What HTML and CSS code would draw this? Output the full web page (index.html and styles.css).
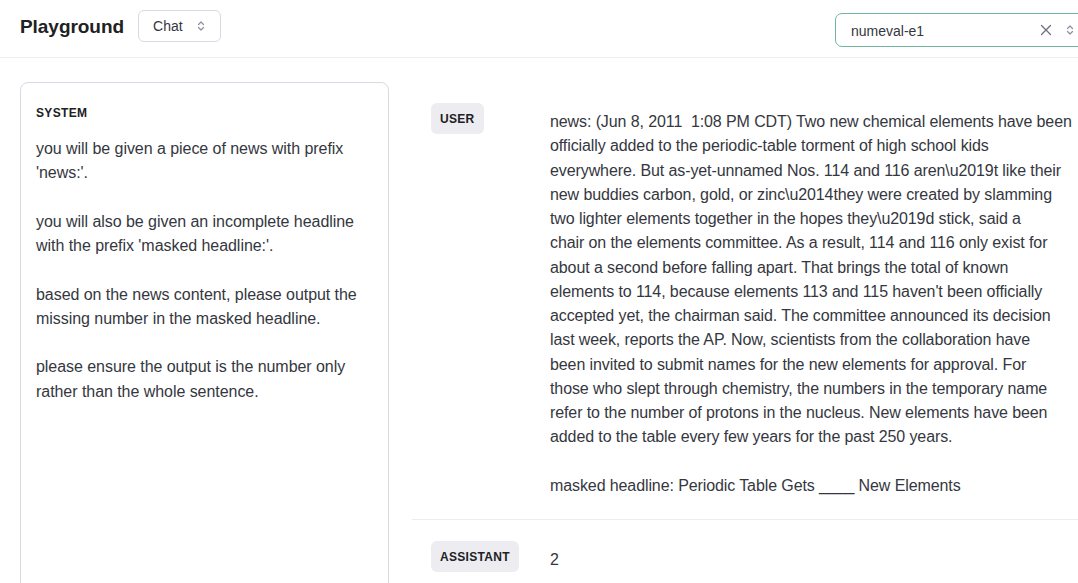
FILE: index.html
```html
<!DOCTYPE html>
<html lang="en">
<head>
<meta charset="utf-8">
<title>Playground</title>
<link rel="stylesheet" href="styles.css">
</head>
<body>
<header class="topbar">
  <div class="topbar-left">
    <h1 class="title">Playground</h1>
    <button class="mode-select">
      <span>Chat</span>
      <svg class="chevrons" width="8" height="12" viewBox="0 0 8 12" fill="none" stroke="currentColor" stroke-width="1.2" stroke-linecap="round" stroke-linejoin="round"><path d="M1.5 4.5 4 2l2.5 2.5"/><path d="M1.5 7.5 4 10l2.5-2.5"/></svg>
    </button>
  </div>
  <div class="model-select">
    <span class="model-name">numeval-e1</span>
    <svg class="clear" width="12" height="12" viewBox="0 0 12 12" fill="none" stroke="currentColor" stroke-width="1.3" stroke-linecap="round"><path d="M1.5 1.5l9 9M10.5 1.5l-9 9"/></svg>
    <svg class="chevrons" width="8" height="12" viewBox="0 0 8 12" fill="none" stroke="currentColor" stroke-width="1.2" stroke-linecap="round" stroke-linejoin="round"><path d="M1.5 4.5 4 2l2.5 2.5"/><path d="M1.5 7.5 4 10l2.5-2.5"/></svg>
  </div>
</header>

<main class="workspace">
  <section class="system-panel">
    <div class="panel-label">SYSTEM</div>
    <div class="system-text">
      <p>you will be given a piece of news with prefix 'news:'.</p>
      <p>you will also be given an incomplete headline with the prefix 'masked headline:'.</p>
      <p>based on the news content, please output the missing number in the masked headline.</p>
      <p>please ensure the output is the number only rather than the whole sentence.</p>
    </div>
  </section>

  <section class="messages">
    <div class="message">
      <div class="role"><span class="role-badge">USER</span></div>
      <div class="content">
        <p>news: (Jun 8, 2011&nbsp; 1:08 PM CDT) Two new chemical elements have been<br>
officially added to the periodic-table torment of high school kids<br>
everywhere. But as-yet-unnamed Nos. 114 and 116 aren\u2019t like their<br>
new buddies carbon, gold, or zinc\u2014they were created by slamming<br>
two lighter elements together in the hopes they\u2019d stick, said a<br>
chair on the elements committee. As a result, 114 and 116 only exist for<br>
about a second before falling apart. That brings the total of known<br>
elements to 114, because elements 113 and 115 haven't been officially<br>
accepted yet, the chairman said. The committee announced its decision<br>
last week, reports the AP. Now, scientists from the collaboration have<br>
been invited to submit names for the new elements for approval. For<br>
those who slept through chemistry, the numbers in the temporary name<br>
refer to the number of protons in the nucleus. New elements have been<br>
added to the table every few years for the past 250 years.</p>
        <p>masked headline: Periodic Table Gets ____ New Elements</p>
      </div>
    </div>
    <div class="message">
      <div class="role"><span class="role-badge">ASSISTANT</span></div>
      <div class="content">
        <p>2</p>
      </div>
    </div>
  </section>
</main>
</body>
</html>
```
FILE: styles.css
```css
* {
  box-sizing: border-box;
}

html, body {
  margin: 0;
  height: 100%;
  overflow: hidden;
  background: #ffffff;
}

body {
  font-family: "Liberation Sans", Arial, sans-serif;
  color: #353740;
}

.topbar {
  display: flex;
  align-items: center;
  justify-content: space-between;
  height: 58px;
  padding: 0 0 4px 20px;
  border-bottom: 1px solid #ececf1;
}

.topbar-left {
  display: flex;
  align-items: center;
  gap: 14px;
}

.title {
  margin: 0;
  font-size: 19px;
  font-weight: 700;
  color: #202123;
  letter-spacing: -0.05px;
}

.mode-select {
  display: flex;
  align-items: center;
  gap: 14px;
  height: 32px;
  margin-top: -2px;
  padding: 0 15px 0 14px;
  border: 1px solid #d9d9e3;
  border-radius: 6px;
  background: #fff;
  font-family: inherit;
  font-size: 14px;
  color: #353740;
}

.chevrons {
  color: #8e8ea0;
}

.model-select {
  display: flex;
  align-items: center;
  width: 250px;
  height: 34px;
  margin-right: -7px;
  margin-top: 6px;
  padding: 0 10px 0 15px;
  border: 1px solid #6fb5a0;
  border-radius: 7px;
  font-size: 14px;
  color: #353740;
}

.model-name {
  flex: 1;
  padding-top: 3px;
}

.clear {
  color: #6e6e80;
  margin-right: 14px;
}

.workspace {
  display: flex;
  align-items: flex-start;
  padding: 24px 0 0 20px;
}

.system-panel {
  width: 369px;
  height: 540px;
  flex-shrink: 0;
  border: 1px solid #d9d9e3;
  border-radius: 8px;
  padding: 23px 15px 0 15px;
}

.panel-label {
  font-size: 12px;
  font-weight: 700;
  letter-spacing: 0.35px;
  line-height: 14px;
  color: #202123;
}

.system-text {
  margin-top: 17px;
  font-size: 16px;
  line-height: 24.25px;
  letter-spacing: -0.05px;
}

.system-text p {
  margin: 0 0 24.25px;
}

.messages {
  flex: 1;
  min-width: 0;
  margin-left: 23px;
}

.message {
  display: flex;
  align-items: flex-start;
  padding: 21px 0 21px 19px;
  border-bottom: 1px solid #ececf1;
}

.message:last-child {
  border-bottom: none;
}

.role {
  width: 119px;
  flex-shrink: 0;
}

.role-badge {
  display: inline-block;
  padding: 8px 9px 7px;
  border-radius: 6px;
  background: #ececf1;
  font-size: 12px;
  font-weight: 700;
  letter-spacing: 0.3px;
  color: #202123;
  line-height: 16px;
}

.content {
  flex: 1;
  padding-right: 2px;
  font-size: 16px;
  line-height: 24.25px;
  padding-top: 7px;
  letter-spacing: -0.1px;
}

.content p {
  margin: 0 0 24.25px;
}

.content p:last-child {
  margin-bottom: 0;
}
```
